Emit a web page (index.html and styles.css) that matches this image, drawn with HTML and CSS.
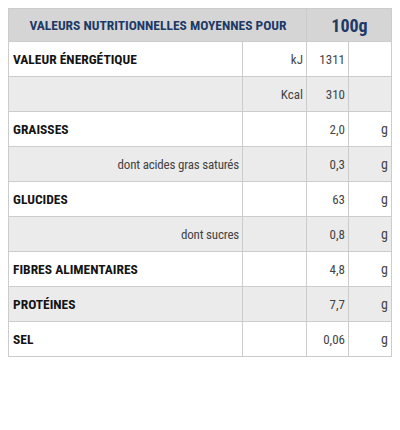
FILE: index.html
```html
<!DOCTYPE html>
<html lang="fr">
<head>
<meta charset="utf-8">
<link rel="stylesheet" href="styles.css">
</head>
<body>
<table class="nutri">
  <colgroup>
    <col class="c-label"><col class="c-unit"><col class="c-val"><col class="c-g">
  </colgroup>
  <thead>
    <tr class="head">
      <th colspan="2" class="h-title">VALEURS NUTRITIONNELLES MOYENNES POUR</th>
      <th colspan="2" class="h-qty">100g</th>
    </tr>
  </thead>
  <tbody>
    <tr class="odd"><td class="lbl">VALEUR ÉNERGÉTIQUE</td><td class="unit">kJ</td><td class="val">1311</td><td class="g"></td></tr>
    <tr class="even"><td class="lbl"></td><td class="unit">Kcal</td><td class="val">310</td><td class="g"></td></tr>
    <tr class="odd"><td class="lbl">GRAISSES</td><td class="unit"></td><td class="val">2,0</td><td class="g">g</td></tr>
    <tr class="even"><td class="sub">dont acides gras saturés</td><td class="unit"></td><td class="val">0,3</td><td class="g">g</td></tr>
    <tr class="odd"><td class="lbl">GLUCIDES</td><td class="unit"></td><td class="val">63</td><td class="g">g</td></tr>
    <tr class="even"><td class="sub">dont sucres</td><td class="unit"></td><td class="val">0,8</td><td class="g">g</td></tr>
    <tr class="odd"><td class="lbl">FIBRES ALIMENTAIRES</td><td class="unit"></td><td class="val">4,8</td><td class="g">g</td></tr>
    <tr class="even"><td class="lbl">PROTÉINES</td><td class="unit"></td><td class="val">7,7</td><td class="g">g</td></tr>
    <tr class="odd"><td class="lbl">SEL</td><td class="unit"></td><td class="val">0,06</td><td class="g">g</td></tr>
  </tbody>
</table>
</body>
</html>
```
FILE: styles.css
```css
body {
  margin: 8px;
  background: #ffffff;
  font-family: "Roboto Condensed", "Open Sans", sans-serif;
}
.nutri {
  width: 383px;
  border-collapse: collapse;
  table-layout: fixed;
}
.c-label { width: 234px; }
.c-unit { width: 64px; }
.c-val { width: 42px; }
.c-g { width: 43px; }
.nutri th, .nutri td {
  border: 1px solid #cccccc;
  padding: 0 3px 0 4px;
  white-space: nowrap;
  overflow: hidden;
}
.head { height: 33px; background: #d5d5d5; }
.h-title {
  font-size: 13.5px;
  font-weight: 700;
  color: #1d3a66;
  text-align: center;
  padding-top: 1px;
}
.h-qty {
  font-size: 18px;
  font-weight: 700;
  color: #1d3a66;
  text-align: center;
  padding-top: 2px;
}
.nutri tbody tr { height: 35px; }
.odd { background: #ffffff; }
.even { background: #ebebeb; }
.lbl {
  font-size: 13.5px;
  font-weight: 700;
  color: #141414;
  text-align: left;
}
.sub, .unit, .val, .g {
  font-size: 13px;
  font-weight: 400;
  color: #444444;
  text-align: right;
}
.sub { letter-spacing: -0.2px; }
.g { font-size: 14px; padding-top: 4px; }
```
